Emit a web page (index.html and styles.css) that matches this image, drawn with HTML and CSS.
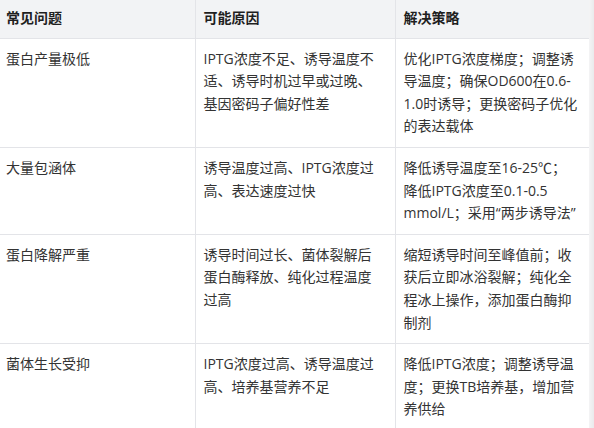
FILE: index.html
```html
<!DOCTYPE html>
<html lang="zh-CN">
<head>
<meta charset="utf-8">
<link rel="stylesheet" href="styles.css">
</head>
<body>
<div class="wrap">
<table class="grid">
  <colgroup>
    <col class="c1"><col class="c2"><col class="c3">
  </colgroup>
  <thead>
    <tr><th>常见问题</th><th>可能原因</th><th>解决策略</th></tr>
  </thead>
  <tbody>
    <tr>
      <td>蛋白产量极低</td>
      <td>IPTG浓度不足、诱导温度不适、诱导时机过早或过晚、基因密码子偏好性差</td>
      <td>优化IPTG浓度梯度；调整诱导温度；确保OD600在0.6-1.0时诱导；更换密码子优化的表达载体</td>
    </tr>
    <tr>
      <td>大量包涵体</td>
      <td>诱导温度过高、IPTG浓度过高、表达速度过快</td>
      <td>降低诱导温度至16-25℃；降低IPTG浓度至0.1-0.5 mmol/L；采用“两步诱导法”</td>
    </tr>
    <tr>
      <td>蛋白降解严重</td>
      <td>诱导时间过长、菌体裂解后蛋白酶释放、纯化过程温度过高</td>
      <td>缩短诱导时间至峰值前；收获后立即冰浴裂解；纯化全程冰上操作，添加蛋白酶抑制剂</td>
    </tr>
    <tr>
      <td>菌体生长受抑</td>
      <td>IPTG浓度过高、诱导温度过高、培养基营养不足</td>
      <td>降低IPTG浓度；调整诱导温度；更换TB培养基，增加营养供给</td>
    </tr>
  </tbody>
</table>
</div>
</body>
</html>
```
FILE: styles.css
```css
html, body {
  margin: 0;
  padding: 0;
  background: #ffffff;
}
body {
  font-family: "Open Sans", "Noto Sans CJK SC", sans-serif;
  font-size: 14px;
  color: #333333;
}
.wrap {
  position: relative;
  width: 594px;
  overflow: hidden;
}
.wrap::after {
  content: "";
  position: absolute;
  top: 0;
  right: 0;
  width: 5px;
  height: 100%;
  background: linear-gradient(to right, #f4f4f5, #eaeaec);
}
.grid {
  border-collapse: collapse;
  table-layout: fixed;
  width: 590px;
}
.c1 { width: 195px; }
.c2 { width: 200px; }
.c3 { width: 195px; }
.grid th,
.grid td {
  text-align: left;
  vertical-align: top;
  line-height: 22.6px;
  padding: 9px 14px 9px 8px;
  border-bottom: 1px solid #e3e4e8;
  border-left: 1px solid #e3e4e8;
}
.grid th:first-child,
.grid td:first-child {
  border-left: none;
  padding-left: 6px;
}
.grid th:last-child,
.grid td:last-child {
  border-right: 1px solid #e3e4e8;
  padding-right: 11px;
}
.grid th {
  background: #f2f3f5;
  font-weight: 700;
  color: #1f1f1f;
  padding-top: 7px;
  padding-bottom: 8px;
}
```
